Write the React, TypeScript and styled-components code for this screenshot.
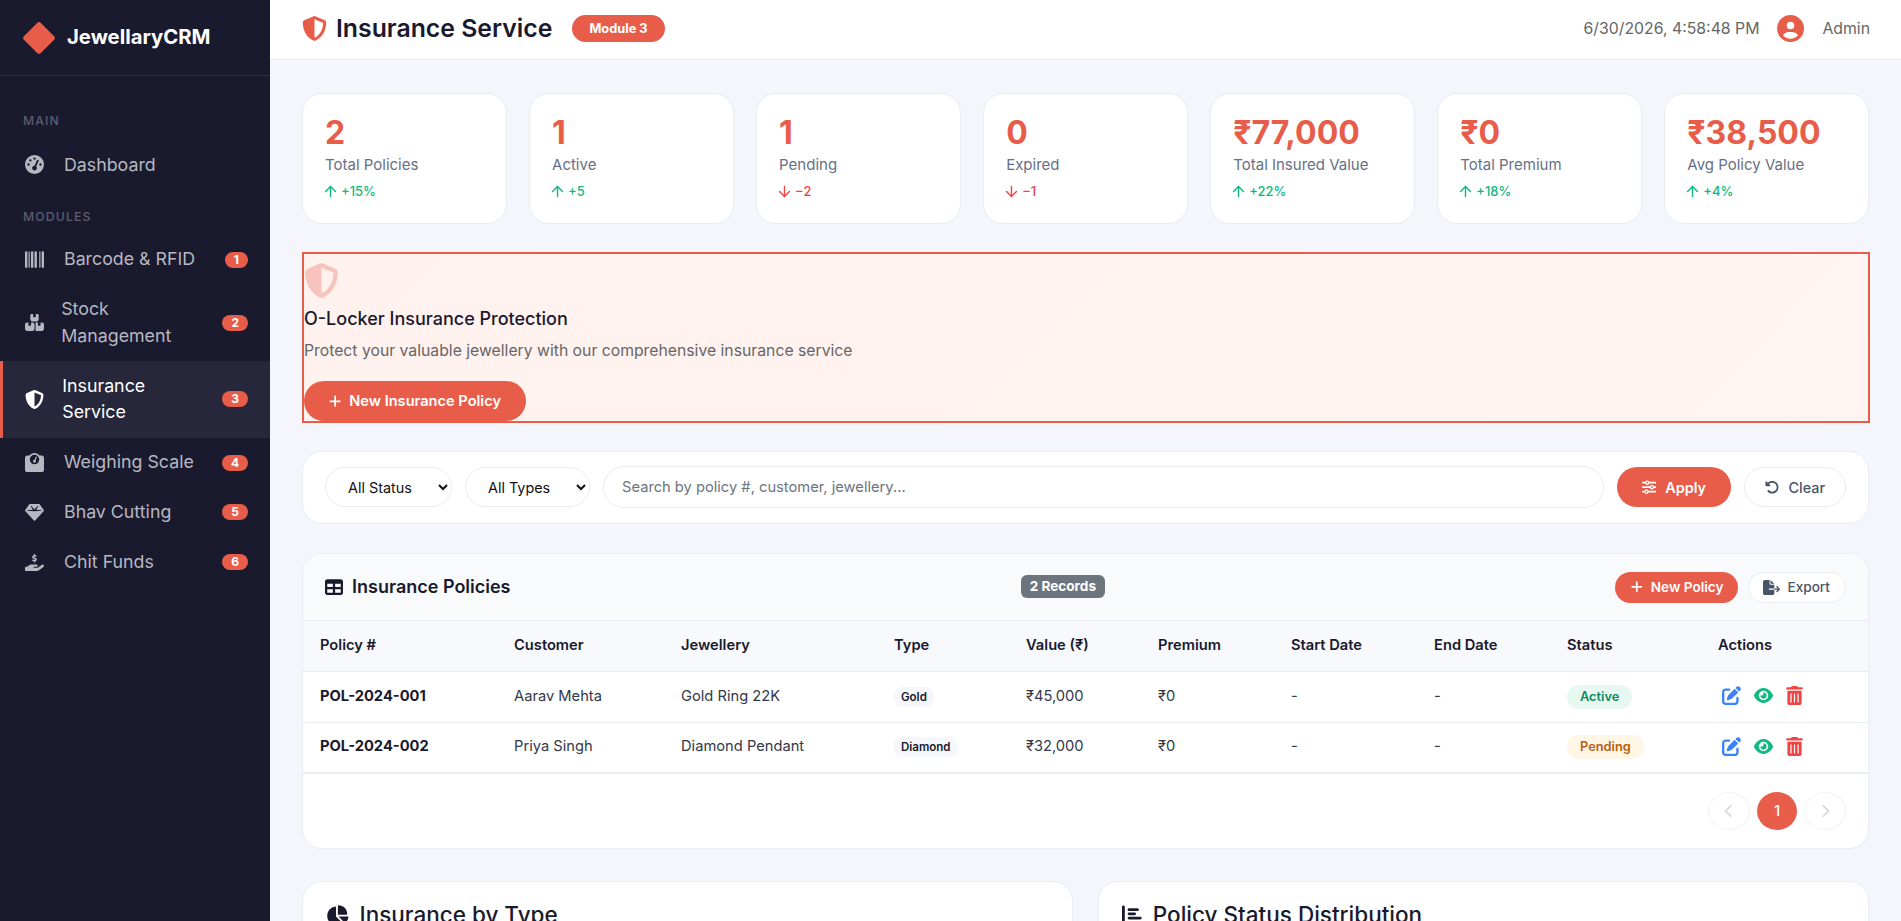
import React from "react";
import styled, { createGlobalStyle } from "styled-components";
import { ArrowDown, ArrowUp } from "lucide-react";
import {
  FaBarcode,
  FaBoxesStacked,
  FaChartPie,
  FaChevronLeft,
  FaChevronRight,
  FaCircleUser,
  FaEye,
  FaFileExport,
  FaGaugeHigh,
  FaGem,
  FaHandHoldingDollar,
  FaPenToSquare,
  FaPlus,
  FaRotateLeft,
  FaShieldHalved,
  FaSliders,
  FaTable,
  FaTrashCan,
  FaWeightScale,
  FaChartBar,
} from "react-icons/fa6";

const accent = "#e85d4a";
const ink = "#1a1a2e";
const line = "#e9ecf2";

const GlobalStyle = createGlobalStyle`
    * {
        box-sizing: border-box;
    }
    html, body {
        margin: 0;
        height: 100%;
        overflow: hidden;
    }
    body {
        font-family: Inter, "Noto Sans", sans-serif;
        color: ${ink};
        background: #f4f6fb;
        line-height: 1.6;
    }
`;

const Shell = styled.div`
    display: flex;
    height: 100vh;
`;

const Sidebar = styled.aside`
    flex: 0 0 270px;
    background: ${ink};
    color: #b7b7c2;
`;

const Brand = styled.div`
    display: flex;
    align-items: center;
    gap: 16px;
    height: 76px;
    padding: 0 22px;
    border-bottom: 1px solid #2e2e42;
    color: #fff;
    font-size: 20.3px;
    font-weight: 700;
`;

const BrandMark = styled.span`
    width: 24px;
    height: 24px;
    margin-left: 5px;
    background: ${accent};
    border-radius: 3px;
    transform: rotate(45deg);
`;

const NavLabel = styled.div<{ $top: number; $h: number }>`
    padding: ${({ $top }) => $top}px 23px 0;
    height: ${({ $h }) => $h}px;
    color: #5d5d6e;
    font-size: 12.2px;
    font-weight: 500;
    letter-spacing: 1.15px;
    text-transform: uppercase;
`;

const NavItem = styled.div<{ $active?: boolean }>`
    display: flex;
    align-items: center;
    padding: 11.5px 22px 11.5px ${({ $active }) => ($active ? 22 : 25)}px;
    font-size: 17.8px;
    line-height: 26.8px;
    color: ${({ $active }) => ($active ? "#fff" : "#b7b7c2")};
    background: ${({ $active }) => ($active ? "#26273a" : "transparent")};
    border-left: ${({ $active }) => ($active ? `3px solid ${accent}` : "0")};
`;

const NavIcon = styled.span`
    flex: 0 0.5 39px;
    display: flex;
    font-size: 19px;
`;

const NavText = styled.span`
    flex: 0 1 auto;
`;

const NavBadge = styled.span`
    margin-left: auto;
    padding: 0 9px;
    flex: none;
    height: 16px;
    border-radius: 8px;
    background: ${accent};
    color: #fff;
    font-size: 12px;
    font-weight: 700;
    line-height: 16px;
`;

const NavGap = styled.span`
    flex: 0 0 22px;
`;

const Main = styled.main`
    flex: 1;
    min-width: 0;
    overflow: hidden;
`;

const TopBar = styled.header`
    display: flex;
    align-items: center;
    height: 60px;
    padding: 0 31px 1.5px 32px;
    background: #fff;
    border-bottom: 1px solid ${line};
`;

const PageIcon = styled.span`
    display: flex;
    color: ${accent};
    font-size: 25px;
    margin-right: 9px;
`;

const PageTitle = styled.h1`
    margin: 0 20px 0 0;
    font-size: 24.8px;
    font-weight: 600;
`;

const ModuleTag = styled.span`
    padding: 0 17px;
    height: 27px;
    border-radius: 14px;
    background: ${accent};
    color: #fff;
    font-size: 12.8px;
    font-weight: 700;
    line-height: 27px;
`;

const TopRight = styled.div`
    display: flex;
    align-items: center;
    margin-left: auto;
    color: #666;
    font-size: 15.8px;
`;

const Avatar = styled.span`
    display: flex;
    margin: 0 18px;
    color: ${accent};
    font-size: 27px;
`;

const Content = styled.div`
    padding: 33px 32px;
    display: flex;
    flex-direction: column;
`;

const StatGrid = styled.div`
    display: grid;
    grid-template-columns: repeat(7, 1fr);
    gap: 22.4px;
    margin-bottom: 28px;
`;

const StatCard = styled.div`
    height: 131px;
    padding: 19px 22px;
    background: #fff;
    border: 1px solid ${line};
    border-radius: 20px;
`;

const StatValue = styled.div`
    color: ${accent};
    font-size: 32px;
    font-weight: 700;
    line-height: 40px;
`;

const StatLabel = styled.div`
    color: #667085;
    font-size: 15px;
    line-height: 23px;
`;

const StatTrend = styled.div<{ $down?: boolean }>`
    display: flex;
    align-items: center;
    gap: 2.5px;
    margin-top: 5px;
    color: ${({ $down }) => ($down ? "#ef4444" : "#10b981")};
    font-size: 13px;
    font-weight: 500;
    line-height: 21px;
    svg {
        margin-left: -3.5px;
    }
`;

const Banner = styled.section`
    height: 171px;
    margin: 0 -1px 28px 0;
    padding-top: 9px;
    border: 2px solid ${accent};
    background: linear-gradient(135deg, #fff1ee, #fff5f2);
`;

const BannerIcon = styled.div`
    display: flex;
    color: ${accent};
    opacity: 0.3;
    font-size: 35px;
`;

const BannerTitle = styled.h2`
    margin: 7px 0 0;
    font-size: 18px;
    font-weight: 500;
    line-height: 28px;
`;

const BannerText = styled.p`
    margin: 6px 0 0;
    color: #666;
    font-size: 15.75px;
    line-height: 24px;
`;

const PillButton = styled.button<{ $outline?: boolean; $small?: boolean }>`
    display: inline-flex;
    align-items: center;
    justify-content: center;
    gap: ${({ $small }) => ($small ? 7 : 9)}px;
    height: ${({ $small }) => ($small ? 31 : 40)}px;
    padding: 0 ${({ $small, $outline }) => ($small ? 15 : $outline ? 20 : 25)}px;
    border: ${({ $outline }) => ($outline ? `1px solid ${line}` : "0")};
    border-radius: 999px;
    background: ${({ $outline }) => ($outline ? "#fff" : accent)};
    color: ${({ $outline }) => ($outline ? "#4a5568" : "#fff")};
    font-family: inherit;
    font-size: ${({ $small }) => ($small ? 13.6 : 14.4)}px;
    font-weight: ${({ $outline }) => ($outline ? 500 : 600)};
    white-space: nowrap;
`;

const BannerButton = styled(PillButton)`
    margin-top: 18px;
    width: 222px;
    gap: 8px;
    font-size: 14.6px;
`;

const ExportIcon = styled.span`
    display: flex;
    margin-left: -1px;
    font-size: 17px;
`;

const FilterCard = styled.section`
    display: flex;
    align-items: center;
    gap: 13px;
    height: 73px;
    margin-bottom: 29px;
    padding: 0 22px 1px;
    background: #fff;
    border: 1px solid ${line};
    border-radius: 20px;
`;

const Select = styled.select<{ $w: number }>`
    flex: 0 0 ${({ $w }) => $w}px;
    height: 40px;
    padding: 0 5px 0 18px;
    border: 1px solid ${line};
    border-radius: 999px;
    background: #fff;
    color: #111;
    font-family: inherit;
    font-size: 14.4px;
`;

const Search = styled.input`
    flex: 1;
    min-width: 0;
    height: 42px;
    padding: 0 18px;
    border: 1px solid ${line};
    border-radius: 999px;
    font-family: inherit;
    font-size: 14.7px;
    &::placeholder {
        color: #6c757d;
        opacity: 1;
    }
`;

const TableCard = styled.section`
    height: 296px;
    margin-bottom: 32px;
    background: #fff;
    border: 1px solid ${line};
    border-radius: 20px;
    overflow: hidden;
`;

const TableHead = styled.div`
    display: flex;
    justify-content: space-between;
    align-items: center;
    height: 67px;
    padding: 0 22px;
    background: #f9fafc;
    border-bottom: 1px solid ${line};
`;

const TableTitle = styled.h3`
    display: flex;
    align-items: center;
    gap: 9px;
    margin: 0;
    font-size: 18px;
    font-weight: 600;
`;

const TitleIcon = styled.span`
    display: flex;
    font-size: 18px;
`;

const Records = styled.span`
    margin-bottom: 2px;
    padding: 0 8.5px;
    height: 23px;
    border-radius: 6px;
    background: #6c757d;
    color: #fff;
    font-size: 13.6px;
    font-weight: 700;
    line-height: 23px;
`;

const HeadActions = styled.div`
    display: flex;
    gap: 10px;
`;

const Table = styled.table`
    width: 100%;
    table-layout: fixed;
    border-collapse: collapse;
    font-size: 14.7px;
`;

const Col = styled.col<{ $w: number }>`
    width: ${({ $w }) => $w}px;
`;

const Th = styled.th`
    height: 50px;
    padding: 0 16px 0 17px;
    background: #f8f9fc;
    border-bottom: 1px solid ${line};
    font-size: 14.7px;
    font-weight: 600;
    text-align: left;
    white-space: nowrap;
`;

const Tr = styled.tr`
    &:last-child td {
        border-bottom-width: 2px;
    }
`;

const Td = styled.td<{ $strong?: boolean }>`
    height: 51px;
    padding: 0 16px 0 17px;
    border-bottom: 1px solid ${line};
    color: ${({ $strong }) => ($strong ? ink : "#33384a")};
    font-weight: ${({ $strong }) => ($strong ? 700 : 400)};
    white-space: nowrap;
`;

const TypeTag = styled.span`
    display: inline-block;
    padding: 0 7px;
    height: 20px;
    border-radius: 8px;
    background: #f6f7fa;
    color: ${ink};
    font-size: 11.5px;
    font-weight: 600;
    line-height: 20px;
    vertical-align: middle;
`;

const StatusTag = styled.span<{ $tone: "active" | "pending" }>`
    display: inline-block;
    padding: 0 13px;
    height: 24px;
    border-radius: 12px;
    background: ${({ $tone }) => ($tone === "active" ? "#e6f8f0" : "#fff6e6")};
    color: ${({ $tone }) => ($tone === "active" ? "#0f8a5f" : "#b7600f")};
    font-size: 12.8px;
    font-weight: 600;
    line-height: 24px;
    vertical-align: middle;
`;

const ActionIcons = styled.div`
    display: flex;
    align-items: center;
    gap: 12.5px;
    padding: 0 0 2px 4px;
    font-size: 19px;
`;

const ActionIcon = styled.span<{ $color: string }>`
    display: flex;
    color: ${({ $color }) => $color};
`;

const Pager = styled.div`
    display: flex;
    justify-content: flex-end;
    align-items: center;
    gap: 7px;
    padding: 18px 22px 0;
`;

const PageBtn = styled.span<{ $current?: boolean }>`
    display: flex;
    align-items: center;
    justify-content: center;
    width: ${({ $current }) => ($current ? 40 : 42)}px;
    height: 38px;
    border-radius: 50%;
    border: ${({ $current }) => ($current ? "0" : "1px solid #f1f2f5")};
    background: ${({ $current }) => ($current ? accent : "#fff")};
    color: ${({ $current }) => ($current ? "#fff" : "#d5d7db")};
    font-size: ${({ $current }) => ($current ? 15 : 14)}px;
    font-weight: 500;
`;

const ChartRow = styled.div`
    display: grid;
    grid-template-columns: 1fr 1fr;
    gap: 25.6px;
`;

const ChartCard = styled.section`
    height: 320px;
    padding: 15px 23px;
    background: #fff;
    border: 1px solid ${line};
    border-radius: 20px;
`;

const ChartTitle = styled.h3<{ $gap: number }>`
    display: flex;
    align-items: center;
    gap: ${({ $gap }) => $gap}px;
    margin: 0;
    font-size: 22.5px;
    font-weight: 500;
    line-height: 36px;
`;

const ChartIcon = styled.span`
    display: flex;
`;

const nav = [
  { icon: <FaBarcode />, label: "Barcode & RFID", n: 1 },
  { icon: <FaBoxesStacked />, label: "Stock Management", n: 2 },
  { icon: <FaShieldHalved />, label: "Insurance Service", n: 3, active: true },
  { icon: <FaWeightScale />, label: "Weighing Scale", n: 4 },
  { icon: <FaGem />, label: "Bhav Cutting", n: 5 },
  { icon: <FaHandHoldingDollar />, label: "Chit Funds", n: 6 },
];

const stats = [
  { value: "2", label: "Total Policies", trend: "+15%" },
  { value: "1", label: "Active", trend: "+5" },
  { value: "1", label: "Pending", trend: "−2", down: true },
  { value: "0", label: "Expired", trend: "−1", down: true },
  { value: "₹77,000", label: "Total Insured Value", trend: "+22%" },
  { value: "₹0", label: "Total Premium", trend: "+18%" },
  { value: "₹38,500", label: "Avg Policy Value", trend: "+4%" },
];

const columns: [string, number][] = [
  ["Policy #", 194],
  ["Customer", 167],
  ["Jewellery", 213],
  ["Type", 132],
  ["Value (₹)", 132],
  ["Premium", 133],
  ["Start Date", 143],
  ["End Date", 133],
  ["Status", 151],
  ["Actions", 167],
];

const policies = [
  { id: "POL-2024-001", customer: "Aarav Mehta", item: "Gold Ring 22K", type: "Gold", value: "₹45,000", status: "Active" },
  { id: "POL-2024-002", customer: "Priya Singh", item: "Diamond Pendant", type: "Diamond", value: "₹32,000", status: "Pending" },
];

export default function App() {
  return (
    <Shell>
      <GlobalStyle />
      <Sidebar>
        <Brand>
          <BrandMark />
          JewellaryCRM
        </Brand>
        <NavLabel $top={35} $h={64}>
          Main
        </NavLabel>
        <NavItem>
          <NavIcon>
            <FaGaugeHigh />
          </NavIcon>
          <NavText>Dashboard</NavText>
        </NavItem>
        <NavLabel $top={17} $h={45}>
          Modules
        </NavLabel>
        {nav.map((item) => (
          <NavItem key={item.n} $active={item.active}>
            <NavIcon>{item.icon}</NavIcon>
            <NavText>{item.label}</NavText>
            <NavGap />
            <NavBadge>{item.n}</NavBadge>
          </NavItem>
        ))}
      </Sidebar>
      <Main>
        <TopBar>
          <PageIcon>
            <FaShieldHalved />
          </PageIcon>
          <PageTitle>Insurance Service</PageTitle>
          <ModuleTag>Module 3</ModuleTag>
          <TopRight>
            6/30/2026, 4:58:48 PM
            <Avatar>
              <FaCircleUser />
            </Avatar>
            Admin
          </TopRight>
        </TopBar>
        <Content>
          <StatGrid>
            {stats.map((s) => (
              <StatCard key={s.label}>
                <StatValue>{s.value}</StatValue>
                <StatLabel>{s.label}</StatLabel>
                <StatTrend $down={s.down}>
                  {s.down ? <ArrowDown size={17} /> : <ArrowUp size={17} />}
                  {s.trend}
                </StatTrend>
              </StatCard>
            ))}
          </StatGrid>
          <Banner>
            <BannerIcon>
              <FaShieldHalved />
            </BannerIcon>
            <BannerTitle>O-Locker Insurance Protection</BannerTitle>
            <BannerText>Protect your valuable jewellery with our comprehensive insurance service</BannerText>
            <BannerButton>
              <FaPlus />
              New Insurance Policy
            </BannerButton>
          </Banner>
          <FilterCard>
            <Select $w={127} defaultValue="All Status">
              <option>All Status</option>
            </Select>
            <Select $w={125} defaultValue="All Types">
              <option>All Types</option>
            </Select>
            <Search placeholder="Search by policy #, customer, jewellery..." />
            <PillButton>
              <FaSliders />
              Apply
            </PillButton>
            <PillButton $outline>
              <FaRotateLeft />
              Clear
            </PillButton>
          </FilterCard>
          <TableCard>
            <TableHead>
              <TableTitle>
                <TitleIcon>
                  <FaTable />
                </TitleIcon>
                Insurance Policies
              </TableTitle>
              <Records>2 Records</Records>
              <HeadActions>
                <PillButton $small>
                  <FaPlus />
                  New Policy
                </PillButton>
                <PillButton $small $outline>
                  <ExportIcon>
                    <FaFileExport />
                  </ExportIcon>
                  Export
                </PillButton>
              </HeadActions>
            </TableHead>
            <Table>
              <colgroup>
                {columns.map(([name, w]) => (
                  <Col key={name} $w={w} />
                ))}
              </colgroup>
              <thead>
                <tr>
                  {columns.map(([name]) => (
                    <Th key={name}>{name}</Th>
                  ))}
                </tr>
              </thead>
              <tbody>
                {policies.map((p) => (
                  <Tr key={p.id}>
                    <Td $strong>{p.id}</Td>
                    <Td>{p.customer}</Td>
                    <Td>{p.item}</Td>
                    <Td>
                      <TypeTag>{p.type}</TypeTag>
                    </Td>
                    <Td>{p.value}</Td>
                    <Td>₹0</Td>
                    <Td>-</Td>
                    <Td>-</Td>
                    <Td>
                      <StatusTag $tone={p.status === "Active" ? "active" : "pending"}>{p.status}</StatusTag>
                    </Td>
                    <Td>
                      <ActionIcons>
                        <ActionIcon $color="#3b82f6">
                          <FaPenToSquare />
                        </ActionIcon>
                        <ActionIcon $color="#10b981">
                          <FaEye />
                        </ActionIcon>
                        <ActionIcon $color="#ef4444">
                          <FaTrashCan />
                        </ActionIcon>
                      </ActionIcons>
                    </Td>
                  </Tr>
                ))}
              </tbody>
            </Table>
            <Pager>
              <PageBtn>
                <FaChevronLeft />
              </PageBtn>
              <PageBtn $current>1</PageBtn>
              <PageBtn>
                <FaChevronRight />
              </PageBtn>
            </Pager>
          </TableCard>
          <ChartRow>
            <ChartCard>
              <ChartTitle $gap={11}>
                <ChartIcon>
                  <FaChartPie />
                </ChartIcon>
                Insurance by Type
              </ChartTitle>
            </ChartCard>
            <ChartCard>
              <ChartTitle $gap={8}>
                <ChartIcon>
                  <FaChartBar />
                </ChartIcon>
                Policy Status Distribution
              </ChartTitle>
            </ChartCard>
          </ChartRow>
        </Content>
      </Main>
    </Shell>
  );
}
